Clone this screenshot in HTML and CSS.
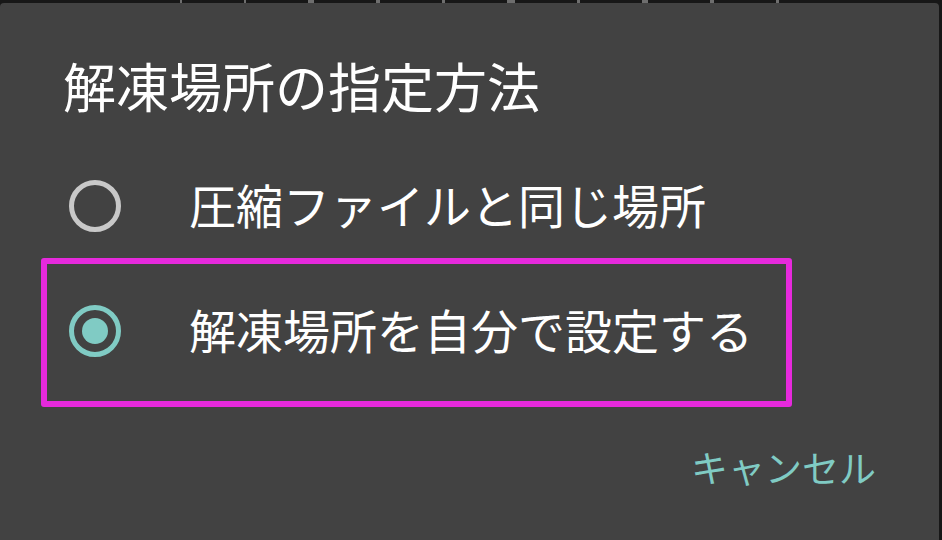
FILE: index.html
```html
<!DOCTYPE html>
<html lang="ja">
<head>
<meta charset="utf-8">
<title>解凍場所の指定方法</title>
<link rel="stylesheet" href="styles.css">
</head>
<body>
<div class="backdrop">
  <i class="tick w2"></i><i class="tick w2"></i><i class="tick w6"></i><i class="tick w4"></i><i class="tick w3"></i><i class="tick w8"></i><i class="tick w3"></i><i class="tick w6"></i><i class="tick w4"></i><i class="tick w3"></i>
</div>
<div class="dialog">
  <h1 class="title">解凍場所の指定方法</h1>
  <div class="options">
    <div class="option">
      <svg class="radio" width="52" height="52" viewBox="0 0 52 52"><circle cx="26" cy="26" r="23.5" fill="none" stroke="#c8c8c8" stroke-width="5"/></svg>
      <span class="label">圧縮ファイルと同じ場所</span>
    </div>
    <div class="option option-marked">
      <svg class="radio" width="52" height="52" viewBox="0 0 52 52"><circle cx="26" cy="26" r="23.5" fill="none" stroke="#80cbc4" stroke-width="5"/><circle cx="26" cy="26" r="13" fill="#80cbc4"/></svg>
      <span class="label">解凍場所を自分で設定する</span>
    </div>
  </div>
  <div class="actions">
    <span class="btn">キャンセル</span>
  </div>
</div>
</body>
</html>
```
FILE: styles.css
```css
html, body {
  margin: 0;
  padding: 0;
  background: #171717;
  overflow: hidden;
  width: 942px;
  height: 540px;
  font-family: "Noto Sans CJK JP", "Noto Sans", sans-serif;
}
.backdrop {
  height: 3px;
  display: flex;
  gap: 62px;
  padding-left: 180px;
  align-items: flex-start;
}
.tick {
  display: block;
  height: 3px;
  background: #6e6e6e;
}
.w2 { width: 2px; }
.w3 { width: 3px; }
.w4 { width: 4px; }
.w6 { width: 6px; }
.w8 { width: 8px; }
.dialog {
  width: 939px;
  height: 600px;
  background: #424242;
  border-radius: 4px;
  box-sizing: border-box;
  padding-top: 56px;
}
.title {
  margin: 0;
  padding-left: 63px;
  font-size: 53px;
  line-height: 53px;
  font-weight: 400;
  color: #ffffff;
}
.options {
  margin-top: 31px;
  display: flex;
  flex-direction: column;
}
.option {
  height: 125px;
  display: flex;
  align-items: center;
  padding-left: 69px;
  gap: 68px;
  position: relative;
}
.radio {
  flex: none;
  display: block;
}
.label {
  font-size: 47px;
  line-height: 48px;
  padding-bottom: 4px;
  color: #ffffff;
  white-space: nowrap;
}
.option-marked::after {
  content: "";
  position: absolute;
  left: 41px;
  top: -10px;
  width: 751px;
  height: 149px;
  box-sizing: border-box;
  border: 6px solid #e629dc;
  border-radius: 3px;
}
.actions {
  margin-top: 56px;
  display: flex;
  justify-content: flex-end;
  padding-right: 63px;
}
.btn {
  font-size: 37px;
  line-height: 37px;
  color: #80cbc4;
}
```
